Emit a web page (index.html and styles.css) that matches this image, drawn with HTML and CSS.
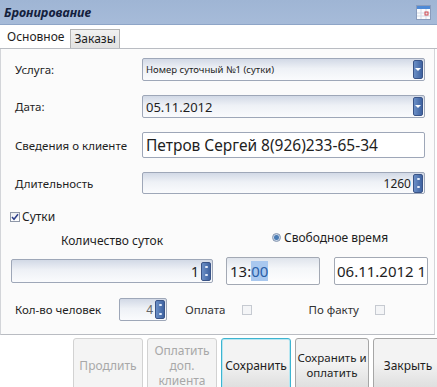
FILE: index.html
```html
<!DOCTYPE html>
<html lang="ru">
<head>
  <meta charset="UTF-8">
  <title>Бронирование</title>
  <link rel="stylesheet" href="styles.css">
</head>
<body>
  <div class="window">
    <div class="titlebar">
      <span class="title">Бронирование</span>
      <svg class="cal-icon" width="15" height="15" viewBox="0 0 15 15">
        <rect x="0.5" y="0.5" width="14" height="14" fill="#fbfcfe" stroke="#8a9cbc"/>
        <rect x="1" y="1" width="13" height="3" fill="#4f8ad6"/>
        <line x1="1" y1="8" x2="14" y2="8" stroke="#d5dbe6"/>
        <line x1="1" y1="11" x2="14" y2="11" stroke="#d5dbe6"/>
        <line x1="5" y1="4" x2="5" y2="14" stroke="#d5dbe6"/>
        <line x1="10" y1="4" x2="10" y2="14" stroke="#d5dbe6"/>
        <rect x="9" y="7" width="3" height="3" fill="none" stroke="#d2494f"/>
      </svg>
    </div>

    <ul class="tabs">
      <li class="tab active">Основное</li>
      <li class="tab">Заказы</li>
    </ul>

    <div class="panel">
      <div class="row">
        <label class="label">Услуга:</label>
        <div class="field combo small-text">
          <span class="value">Номер суточный №1 (сутки)</span>
          <span class="drop"><i></i></span>
        </div>
      </div>

      <div class="row">
        <label class="label">Дата:</label>
        <div class="field combo date-text">
          <span class="value">05.11.2012</span>
          <span class="drop"><i></i></span>
        </div>
      </div>

      <div class="row">
        <label class="label">Сведения о клиенте</label>
        <div class="field textbox client">Петров Сергей 8(926)233-65-34</div>
      </div>

      <div class="row">
        <label class="label">Длительность</label>
        <div class="field combo spin-field">
          <span class="value num">1260</span>
          <span class="spin"><i></i><i></i></span>
        </div>
      </div>

      <div class="check-row">
        <span class="checkbox checked">
          <svg width="8" height="8" viewBox="0 0 8 8"><path d="M1 4 L3 6.3 L7 1.3" fill="none" stroke="#2d3f8a" stroke-width="1.5"/></svg>
        </span>
        <span>Сутки</span>
      </div>

      <div class="days">
        <div class="days-left">
          <div class="caption">Количество суток</div>
          <div class="field combo spin-field days-spin">
            <span class="value num">1</span>
            <span class="spin"><i></i><i></i></span>
          </div>
        </div>
        <div class="days-right">
          <div class="radio-line">
            <span class="radio"></span>
            <span>Свободное время</span>
          </div>
          <div class="time-boxes">
            <div class="field textbox time">13:<span class="sel">00</span></div>
            <div class="field textbox time until">06.11.2012 1</div>
          </div>
        </div>
      </div>

      <div class="people-row">
        <span class="people-label">Кол-во человек</span>
        <div class="field combo spin-field people">
          <span class="value num">4</span>
          <span class="spin"><i></i><i></i></span>
        </div>
        <span class="pay-label">Оплата</span>
        <span class="checkbox disabled"></span>
        <span class="fact-label">По факту</span>
        <span class="checkbox disabled"></span>
      </div>
    </div>

    <div class="actions">
      <button class="btn" disabled>Продлить</button>
      <button class="btn" disabled>Оплатить доп. клиента</button>
      <button class="btn focused">Сохранить</button>
      <button class="btn wide">Сохранить и<br>оплатить</button>
      <button class="btn">Закрыть</button>
    </div>
  </div>
</body>
</html>
```

FILE: styles.css
```css
body {
  margin: 0;
  background: #ffffff;
  font-family: "Noto Sans", "Open Sans", sans-serif;
  font-size: 11.5px;
  color: #1e1e1e;
}

.window {
  width: 437px;
  height: 387px;
  overflow: hidden;
  background: #ffffff;
}

.titlebar {
  height: 25px;
  display: flex;
  align-items: center;
  justify-content: space-between;
  padding: 0 6px 0 4px;
  background: linear-gradient(#9fb5d4, #a6bbd9);
  border-bottom: 1px solid #8ea5c7;
  box-sizing: border-box;
}

.title {
  font-weight: bold;
  font-style: italic;
  font-size: 12.5px;
  color: #14213d;
}

.cal-icon {
  display: block;
}

.tabs {
  list-style: none;
  margin: 0;
  padding: 2px 0 0 2px;
  height: 21px;
  display: flex;
  align-items: flex-end;
  border-bottom: 1px solid #b9bcc2;
}

.tab {
  height: 19px;
  line-height: 18px;
  padding: 0 3px;
  font-size: 12px;
  box-sizing: border-box;
  background: linear-gradient(#f1f1f1, #e2e2e2);
  border: 1px solid #b4b4b4;
  border-bottom: none;
}

.tab.active {
  height: 21px;
  background: #ffffff;
  border-color: transparent;
  padding: 0 4px;
  margin-right: 1px;
}

.panel {
  height: 286px;
  box-sizing: border-box;
  padding: 9px 9px 0 14px;
  border-left: 1px solid #d3d5d9;
  border-right: 1px solid #d3d5d9;
  border-bottom: 1px solid #b9bcc2;
  margin-right: 2px;
  background: #fbfbfb;
}

.row {
  display: flex;
  align-items: center;
  margin-bottom: 14px;
}

.label {
  width: 127px;
  flex: none;
}

.field {
  box-sizing: border-box;
  border: 1px solid #9ea7b8;
  border-radius: 2px;
}

.combo {
  height: 23px;
  width: 285px;
  display: flex;
  align-items: center;
  background: linear-gradient(#d2d9e6, #eef1f6 45%, #fafbfd);
}

.combo .value {
  flex: 1;
  padding-left: 3px;
}

.small-text {
  font-size: 9.5px;
}

.date-text {
  font-size: 13px;
}

.drop,
.spin {
  width: 10px;
  height: 19px;
  margin-right: 1px;
  border-radius: 2px;
  background: linear-gradient(90deg, #6b8fc6, #3e62a0);
  display: flex;
  flex-direction: column;
  align-items: center;
  justify-content: center;
  box-sizing: border-box;
  border: 1px solid #3a5487;
}

.drop i {
  width: 0;
  height: 0;
  border-left: 3px solid transparent;
  border-right: 3px solid transparent;
  border-top: 3px solid #ffffff;
}

.spin {
  justify-content: space-around;
}

.spin i {
  width: 3px;
  height: 2px;
  background: #e3ecfa;
  border-radius: 1px;
}

.textbox {
  background: #ffffff;
  display: flex;
  align-items: center;
  padding-left: 3px;
}

.client {
  width: 286px;
  height: 26px;
  font-size: 15.5px;
}

.spin-field {
  height: 22px;
  font-size: 12px;
}

.num {
  text-align: right;
  padding-right: 2px;
}

.check-row {
  display: flex;
  align-items: center;
  gap: 2px;
  margin: 1px 0 0 -5px;
  font-size: 12px;
}

.checkbox {
  width: 8px;
  height: 8px;
  border: 1px solid #8f98a8;
  background: linear-gradient(#eceef2, #ffffff);
  display: inline-flex;
  align-items: center;
  justify-content: center;
}

.checkbox svg {
  display: block;
}

.checkbox.disabled {
  border-color: #c6cad1;
  background: #f4f5f7;
}

.days {
  display: flex;
  margin: 7px 0 0 -4px;
}

.days-left {
  width: 202px;
}

.caption {
  text-align: center;
  font-size: 12px;
  height: 19px;
  margin-bottom: 8px;
}

.days-spin {
  width: 202px;
  height: 24px;
  font-size: 14px;
}

.days-right {
  margin-left: 13px;
}

.radio-line {
  display: flex;
  align-items: center;
  gap: 3px;
  font-size: 12px;
  margin: -4px 0 0 46px;
  height: 19px;
}

.radio {
  width: 7px;
  height: 7px;
  border-radius: 50%;
  border: 1px solid #8596b0;
  background: radial-gradient(circle, #4b7db5 0 2px, #c6d4e6 3px);
}

.time-boxes {
  display: flex;
  gap: 14px;
  margin-top: 10px;
}

.time {
  width: 94px;
  height: 28px;
  font-size: 15px;
  border-color: #a3a9b4;
  white-space: nowrap;
  overflow: hidden;
  background: linear-gradient(#dfe4ec, #f4f6f9 40%, #ffffff);
}

.sel {
  background: #a9c8ef;
  color: #2a5fa8;
}

.until {
  background: #ffffff;
  padding-left: 2px;
}

.people-row {
  display: flex;
  align-items: center;
  margin-top: 13px;
}

.people-label {
  width: 104px;
}

.people {
  width: 48px;
  height: 23px;
  font-size: 12px;
  color: #666;
}

.pay-label {
  margin-left: 18px;
  color: #333;
}

.people-row .checkbox {
  margin-left: 16px;
}

.fact-label {
  margin-left: 57px;
  color: #333;
}

.actions {
  display: flex;
  gap: 4px;
  padding: 3px 0 0 73px;
}

.btn {
  width: 70px;
  height: 54px;
  flex: none;
  font-family: inherit;
  font-size: 12px;
  line-height: 15px;
  color: #1e1e1e;
  border: 1px solid #a6a6a6;
  border-radius: 3px;
  background: linear-gradient(#f3f3f3 45%, #dcdcdc);
  padding: 0 1px;
}

.btn.wide {
  width: 74px;
  padding: 0;
  font-size: 11.5px;
  white-space: nowrap;
}

.btn:disabled {
  color: #a8a8a8;
  background: #f4f4f4;
  border-color: #d2d2d2;
}

.btn.focused {
  border-color: #3db4d0;
  box-shadow: inset 0 0 0 1px #b8e6f1;
}
```
